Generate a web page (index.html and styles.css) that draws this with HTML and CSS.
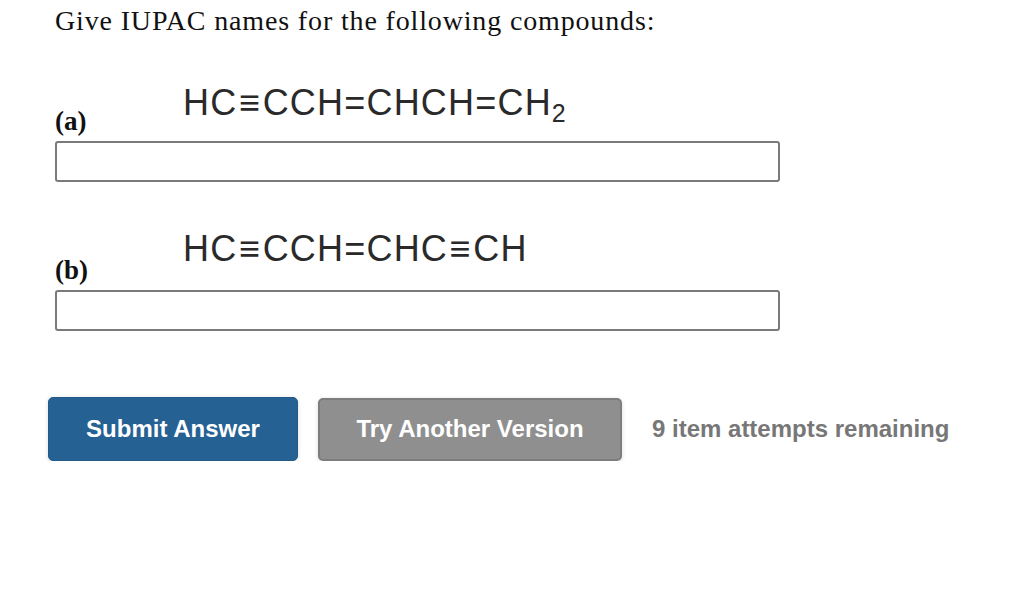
FILE: index.html
```html
<!DOCTYPE html>
<html>
<head>
<meta charset="utf-8">
<link rel="stylesheet" href="styles.css">
</head>
<body>
<div class="page">
  <p class="title">Give IUPAC names for the following compounds:</p>
  <div class="item item-a">
    <div class="row">
      <span class="label">(a)</span>
      <span class="formula">HC<span class="bond">≡</span>CCH=CHCH=CH<sub>2</sub></span>
    </div>
    <input class="answer" type="text">
  </div>
  <div class="item item-b">
    <div class="row">
      <span class="label">(b)</span>
      <span class="formula">HC<span class="bond">≡</span>CCH=CHC<span class="bond">≡</span>CH</span>
    </div>
    <input class="answer" type="text">
  </div>
  <div class="actions">
    <button class="btn btn-submit">Submit Answer</button>
    <button class="btn btn-try">Try Another Version</button>
    <span class="attempts">9 item attempts remaining</span>
  </div>
</div>
</body>
</html>
```
FILE: styles.css
```css
html, body {
  margin: 0;
  padding: 0;
  background: #fff;
}
.page {
  padding: 0 0 0 55px;
}
.title {
  margin: 0;
  padding-top: 5px;
  font-family: "Liberation Serif", "Times New Roman", serif;
  font-size: 28px;
  line-height: 32px;
  letter-spacing: 0.85px;
  color: #111;
}
.item-a {
  margin-top: 48px;
}
.item-b {
  margin-top: 49px;
}
.row {
  display: flex;
  align-items: flex-start;
  height: 56px;
}
.item-b .row {
  height: 59px;
}
.label {
  width: 128px;
  margin-top: 22px;
  font-family: "Liberation Serif", "Times New Roman", serif;
  font-weight: bold;
  font-size: 27px;
  line-height: 28px;
  color: #111;
}
.item-b .label {
  margin-top: 25px;
}
.formula {
  font-family: "Liberation Sans", Arial, sans-serif;
  font-size: 36px;
  line-height: 36px;
  letter-spacing: 1.2px;
  color: #2a2a2a;
  white-space: nowrap;
}
.bond {
  padding: 0 1.5px;
}
.formula sub {
  font-size: 25px;
  vertical-align: -7px;
  line-height: 0;
}
.answer {
  display: block;
  box-sizing: border-box;
  width: 725px;
  height: 41px;
  margin: 0;
  border: 2px solid #7a7a7a;
  border-radius: 3px;
  background: #fff;
}
.actions {
  display: flex;
  align-items: center;
  margin-top: 66px;
  margin-left: -7px;
}
.btn {
  font-family: "Liberation Sans", Arial, sans-serif;
  font-weight: bold;
  font-size: 24px;
  color: #fff;
  border-radius: 5px;
  cursor: pointer;
  box-shadow: 0 1px 4px rgba(0, 0, 0, 0.15);
}
.btn-submit {
  width: 250px;
  height: 64px;
  background: #266194;
  border: 1px solid #225a8a;
}
.btn-try {
  width: 304px;
  height: 63px;
  margin-left: 20px;
  background: #8f8f8f;
  border: 2px solid #7d7d7d;
}
.attempts {
  margin-left: 30px;
  font-family: "Liberation Sans", Arial, sans-serif;
  font-weight: bold;
  font-size: 24px;
  color: #777;
}
```
